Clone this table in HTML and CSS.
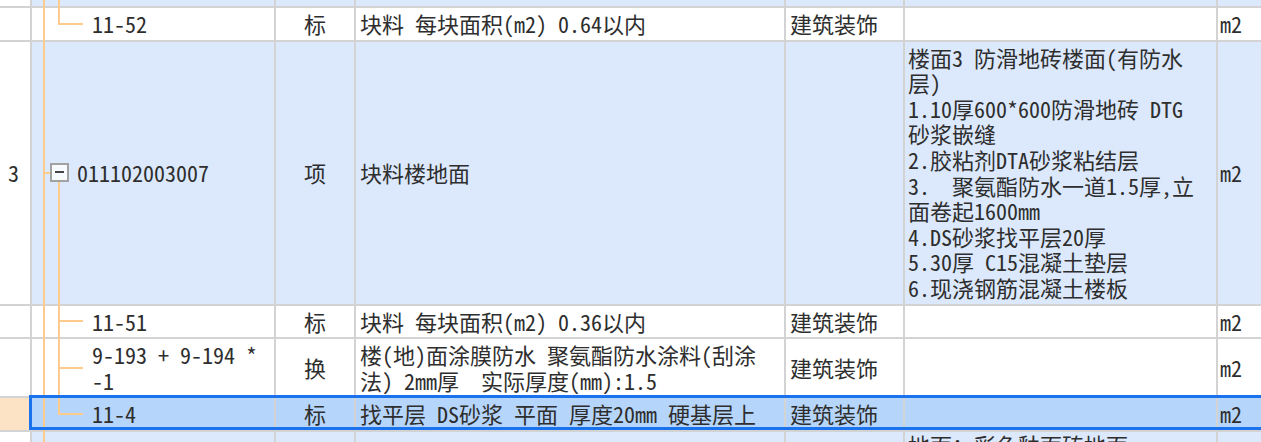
FILE: index.html
```html
<!DOCTYPE html>
<html lang="zh-CN">
<head>
<meta charset="utf-8">
<title>清单</title>
<link rel="stylesheet" href="styles.css">
</head>
<body>
<div class="sheet">
  <div class="row item strip">
    <div class="cell num"></div>
    <div class="cell code"><span class="vl"></span><span class="vl2 full"></span></div>
    <div class="cell"></div><div class="cell"></div><div class="cell"></div><div class="cell"></div><div class="cell"></div>
  </div>

  <div class="row sub">
    <div class="cell num"></div>
    <div class="cell code child"><span class="vl"></span><span class="vl2 half"></span><span class="hl"></span>11-52</div>
    <div class="cell type">标</div>
    <div class="cell name">块料 每块面积(m2) 0.64以内</div>
    <div class="cell">建筑装饰</div>
    <div class="cell desc"></div>
    <div class="cell unit">m2</div>
  </div>

  <div class="row item">
    <div class="cell num">3</div>
    <div class="cell code parent"><span class="vl"></span><span class="tick"></span><span class="box"></span><span class="vl2 below"></span>011102003007</div>
    <div class="cell type">项</div>
    <div class="cell name">块料楼地面</div>
    <div class="cell"></div>
    <div class="cell desc">楼面3 防滑地砖楼面(有防水<br>层)<br>1.10厚600*600防滑地砖 DTG<br>砂浆嵌缝<br>2.胶粘剂DTA砂浆粘结层<br>3.  聚氨酯防水一道1.5厚,立<br>面卷起1600mm<br>4.DS砂浆找平层20厚<br>5.30厚 C15混凝土垫层<br>6.现浇钢筋混凝土楼板</div>
    <div class="cell unit">m2</div>
  </div>

  <div class="row sub">
    <div class="cell num"></div>
    <div class="cell code child"><span class="vl"></span><span class="vl2 full"></span><span class="hl"></span>11-51</div>
    <div class="cell type">标</div>
    <div class="cell name">块料 每块面积(m2) 0.36以内</div>
    <div class="cell">建筑装饰</div>
    <div class="cell desc"></div>
    <div class="cell unit">m2</div>
  </div>

  <div class="row sub">
    <div class="cell num"></div>
    <div class="cell code child"><span class="vl"></span><span class="vl2 full"></span><span class="hl"></span>9-193 + 9-194 *<br>-1</div>
    <div class="cell type">换</div>
    <div class="cell name">楼(地)面涂膜防水 聚氨酯防水涂料(刮涂<br>法) 2mm厚  实际厚度(mm):1.5</div>
    <div class="cell">建筑装饰</div>
    <div class="cell desc"></div>
    <div class="cell unit">m2</div>
  </div>

  <div class="row sub sel">
    <div class="cell num"></div>
    <div class="cell code child"><span class="vl"></span><span class="vl2 half"></span><span class="hl"></span>11-4</div>
    <div class="cell type">标</div>
    <div class="cell name">找平层 DS砂浆 平面 厚度20mm 硬基层上</div>
    <div class="cell">建筑装饰</div>
    <div class="cell desc"></div>
    <div class="cell unit">m2</div>
  </div>

  <div class="row item last">
    <div class="cell num"></div>
    <div class="cell code"><span class="vl"></span></div>
    <div class="cell"></div>
    <div class="cell"></div>
    <div class="cell"></div>
    <div class="cell desc">地面：彩色釉面砖地面</div>
    <div class="cell unit"></div>
  </div>
</div>
</body>
</html>
```

FILE: styles.css
```css
html, body {
  margin: 0;
  padding: 0;
  background: #ffffff;
}

body {
  width: 1261px;
  height: 442px;
  overflow: hidden;
  font-family: "Noto Sans Mono CJK SC", "Noto Sans CJK SC", "Liberation Mono", monospace;
  font-size: 22px;
  line-height: 25.6px;
  color: #2e2e2e;
}

.sheet {
  width: 1318px;
}

.row {
  display: grid;
  grid-template-columns: 32px 244px 80px 430px 119px 313px 100px;
  border-bottom: 2px solid #d3d3d3;
  position: relative;
}

.cell {
  box-sizing: border-box;
  border-right: 2px solid #d3d3d3;
  padding: 3px 4px;
  display: flex;
  align-items: center;
  white-space: pre;
  position: relative;
}

.item .cell {
  background: #dce9fc;
}

.sub .cell {
  background: #ffffff;
}

.row .cell.num {
  background: #ffffff;
  padding-left: 8px;
}

.strip {
  height: 6px;
}

.strip .cell {
  padding: 0;
}

.type {
  justify-content: center;
}

.desc {
  padding-left: 3px;
}

.unit {
  padding-left: 2px;
}

.code.child {
  padding-left: 60px;
}

.code.parent {
  padding-left: 45px;
}

/* tree connectors */
.vl, .vl2, .hl, .tick {
  position: absolute;
  background: #fdcb8c;
  z-index: 1;
}

.vl {
  left: 11px;
  width: 2px;
  top: 0;
  bottom: -2px;
}

.vl2 {
  left: 26px;
  width: 2px;
}

.vl2.full {
  top: 0;
  bottom: -2px;
}

.vl2.half {
  top: 0;
  height: 50%;
}

.vl2.below {
  top: calc(50% + 9px);
  bottom: -2px;
}

.hl {
  left: 26px;
  width: 25px;
  height: 2px;
  top: calc(50% - 1px);
}

.tick {
  left: 12px;
  width: 7px;
  height: 2px;
  top: calc(50% - 1px);
}

.box {
  position: absolute;
  left: 18px;
  top: calc(50% - 10px);
  width: 15px;
  height: 15px;
  border: 2px solid #a2a2a2;
  background: #f7faff;
  z-index: 2;
}

.box::before {
  content: "";
  position: absolute;
  left: 3px;
  top: 6px;
  width: 9px;
  height: 2px;
  background: #444444;
}

/* selection */
.sel .cell {
  background: #b6d5fb;
}

.sel .cell.num {
  background: #fde3c5;
}

.sel::after {
  content: "";
  position: absolute;
  left: 29px;
  right: -10px;
  top: -3px;
  height: 29px;
  border: 3px solid #1a73ec;
  z-index: 3;
  pointer-events: none;
}

.last .cell {
  align-items: flex-start;
  padding-top: 0;
  height: 60px;
}
```
